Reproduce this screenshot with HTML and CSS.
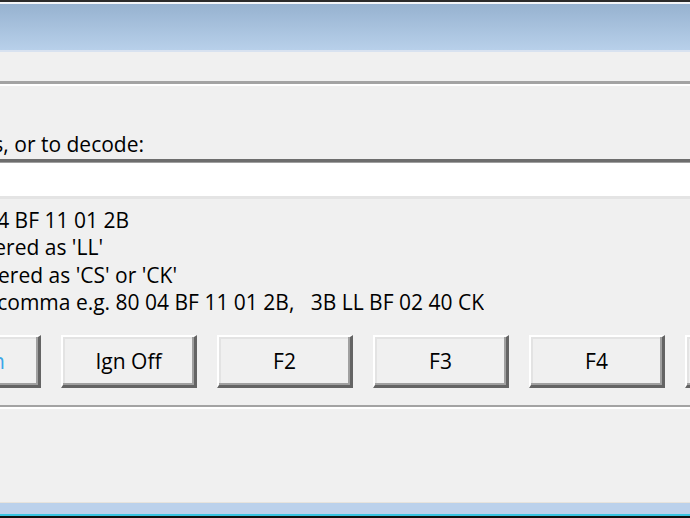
FILE: index.html
```html
<!DOCTYPE html>
<html>
<head>
<meta charset="utf-8">
<link rel="stylesheet" href="styles.css">
</head>
<body>
<div class="window">
  <div class="titlebar"></div>
  <div class="panel">
    <div class="upper"></div>
    <div class="etched"></div>
    <div class="clip label-line"><span>Enter hex bytes, or to decode:</span></div>
    <div class="field"></div>
    <div class="info">
      <div class="clip l1"><span>Example: 80 04 BF 11 01 2B</span></div>
      <div class="clip l2"><span>Length byte can be entered as 'LL'</span></div>
      <div class="clip l3"><span>Checksum can be entered as 'CS' or 'CK'</span></div>
      <div class="clip l4"><span>Separate messages with a comma e.g. 80 04 BF 11 01 2B,   3B LL BF 02 40 CK</span></div>
    </div>
    <div class="buttons">
      <button class="btn on"><span>Ign On</span></button>
      <button class="btn">Ign Off</button>
      <button class="btn">F2</button>
      <button class="btn">F3</button>
      <button class="btn">F4</button>
      <button class="btn">F5</button>
    </div>
    <div class="etched lower"></div>
    <div class="spacer"></div>
  </div>
  <div class="frame-bottom"></div>
</div>
</body>
</html>
```
FILE: styles.css
```css
html, body {
  margin: 0;
  padding: 0;
  width: 690px;
  height: 518px;
  overflow: hidden;
  background: #f0f0f0;
}

.window {
  width: 690px;
  height: 518px;
  display: flex;
  flex-direction: column;
  overflow: hidden;
  font-family: "Open Sans", "Noto Sans", sans-serif;
  font-size: 21px;
  color: #000;
}

.titlebar {
  flex: none;
  height: 48px;
  border-top: 2px solid #2b2b2b;
  box-shadow: inset 0 2px 0 #f3f5f8;
  border-bottom: 2px solid #d8e2f0;
  background: linear-gradient(#95b1cf, #b8d0ea);
}

.panel {
  flex: 1;
  display: flex;
  flex-direction: column;
  min-height: 0;
}

.upper {
  height: 29px;
  flex: none;
}

.etched {
  flex: none;
  height: 3px;
  background: #a3a3a3;
  border-bottom: 2px solid #ffffff;
}

.etched.lower {
  height: 2px;
  margin-top: 17px;
}

.clip {
  display: flex;
  justify-content: flex-end;
  overflow: hidden;
  white-space: pre;
  line-height: 27.5px;
  height: 27.5px;
  flex: none;
}

.clip span {
  flex: none;
}

.label-line {
  margin-top: 45px;
  width: 144px;
}

.field {
  flex: none;
  margin-top: 0;
  height: 34px;
  background: #ffffff;
  border-top: 3px solid #6d6d6d;
  box-shadow: inset 0 1px 0 #a0a0a0;
  border-bottom: 3px solid #e4e4e4;
}

.info {
  margin-top: 8px;
  flex: none;
}

.l1 { width: 129px; }
.l2 { width: 103px; }
.l3 { width: 177px; }
.l4 { width: 484px; }

.buttons {
  flex: none;
  display: flex;
  gap: 20px;
  margin-top: 18px;
  margin-left: -95px;
}

.btn {
  flex: none;
  box-sizing: border-box;
  width: 136px;
  height: 53px;
  padding: 0;
  background: #f0f0f0;
  font-family: inherit;
  font-size: 21px;
  color: #000;
  border-style: solid;
  border-width: 2px 3px 3px 2px;
  border-color: #ffffff #646464 #646464 #ffffff;
  box-shadow: inset -2px -2px 0 #a0a0a0, inset 2px 2px 0 #e3e3e3;
}

.btn.on span {
  color: #3aa7e8;
}

.spacer {
  flex: 1;
}

.frame-bottom {
  flex: none;
  height: 16px;
  background: linear-gradient(to bottom, #e7e3dc 0 1px, #bbd1eb 1px 12px, #38c6e2 12px 14px, #111 14px 16px);
}
```
